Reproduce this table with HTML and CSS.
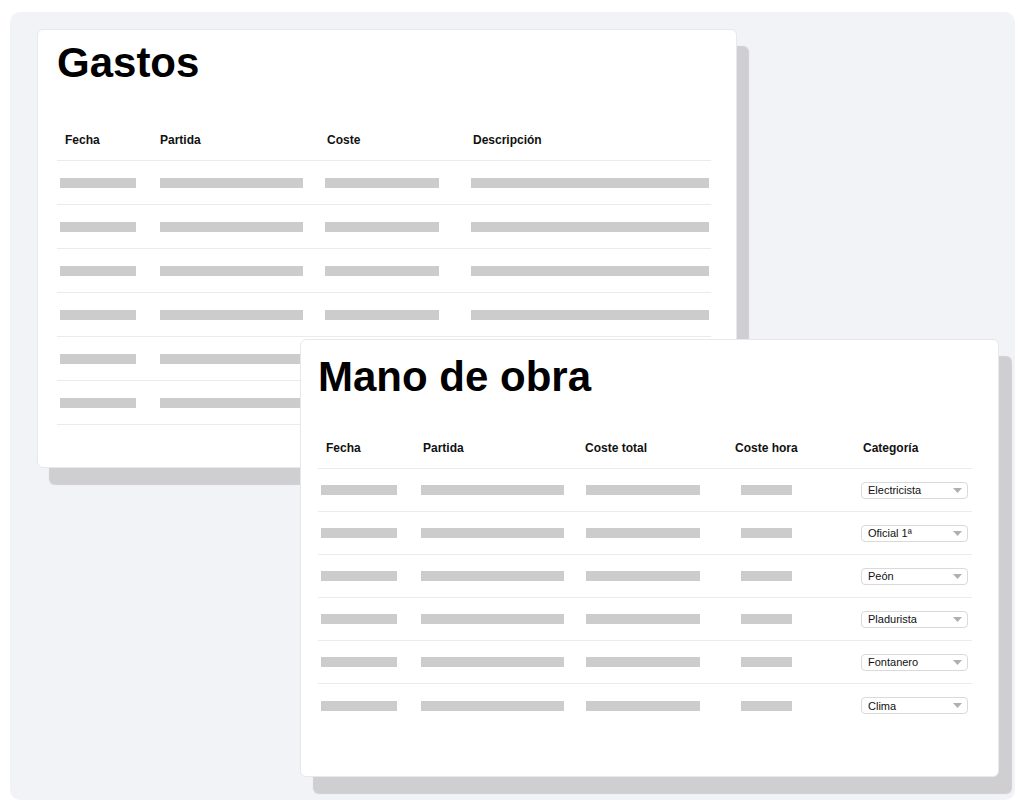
FILE: index.html
```html
<!DOCTYPE html>
<html lang="es">
<head>
<meta charset="utf-8">
<title>Gastos y Mano de obra</title>
<link rel="stylesheet" href="styles.css">
</head>
<body>
<div class="panel">
  <section class="card card-gastos">
    <h1 class="title">Gastos</h1>
    <div class="table t-gastos">
      <div class="row head">
        <div class="cell g1">Fecha</div>
        <div class="cell g2">Partida</div>
        <div class="cell g3">Coste</div>
        <div class="cell g4">Descripción</div>
      </div>
      <div class="row"><div class="cell"><span class="bar w76 b1"></span></div><div class="cell"><span class="bar w143"></span></div><div class="cell"><span class="bar w114"></span></div><div class="cell"><span class="bar w238"></span></div></div>
      <div class="row"><div class="cell"><span class="bar w76 b1"></span></div><div class="cell"><span class="bar w143"></span></div><div class="cell"><span class="bar w114"></span></div><div class="cell"><span class="bar w238"></span></div></div>
      <div class="row"><div class="cell"><span class="bar w76 b1"></span></div><div class="cell"><span class="bar w143"></span></div><div class="cell"><span class="bar w114"></span></div><div class="cell"><span class="bar w238"></span></div></div>
      <div class="row"><div class="cell"><span class="bar w76 b1"></span></div><div class="cell"><span class="bar w143"></span></div><div class="cell"><span class="bar w114"></span></div><div class="cell"><span class="bar w238"></span></div></div>
      <div class="row"><div class="cell"><span class="bar w76 b1"></span></div><div class="cell"><span class="bar w143"></span></div><div class="cell"><span class="bar w114"></span></div><div class="cell"><span class="bar w238"></span></div></div>
      <div class="row"><div class="cell"><span class="bar w76 b1"></span></div><div class="cell"><span class="bar w143"></span></div><div class="cell"><span class="bar w114"></span></div><div class="cell"><span class="bar w238"></span></div></div>
    </div>
  </section>

  <section class="card card-mano">
    <h1 class="title">Mano de obra</h1>
    <div class="table t-mano">
      <div class="row head">
        <div class="cell m1">Fecha</div>
        <div class="cell m2">Partida</div>
        <div class="cell m3">Coste total</div>
        <div class="cell m4">Coste hora</div>
        <div class="cell m5">Categoría</div>
      </div>
      <div class="row"><div class="cell"><span class="bar w76 b1"></span></div><div class="cell"><span class="bar w143"></span></div><div class="cell"><span class="bar w114 b3"></span></div><div class="cell"><span class="bar w51 b4"></span></div><div class="cell"><div class="select"><span>Electricista</span><svg class="caret" width="9" height="5" viewBox="0 0 9 5"><path d="M0 0h9L4.5 5z"/></svg></div></div></div>
      <div class="row"><div class="cell"><span class="bar w76 b1"></span></div><div class="cell"><span class="bar w143"></span></div><div class="cell"><span class="bar w114 b3"></span></div><div class="cell"><span class="bar w51 b4"></span></div><div class="cell"><div class="select"><span>Oficial 1ª</span><svg class="caret" width="9" height="5" viewBox="0 0 9 5"><path d="M0 0h9L4.5 5z"/></svg></div></div></div>
      <div class="row"><div class="cell"><span class="bar w76 b1"></span></div><div class="cell"><span class="bar w143"></span></div><div class="cell"><span class="bar w114 b3"></span></div><div class="cell"><span class="bar w51 b4"></span></div><div class="cell"><div class="select"><span>Peón</span><svg class="caret" width="9" height="5" viewBox="0 0 9 5"><path d="M0 0h9L4.5 5z"/></svg></div></div></div>
      <div class="row"><div class="cell"><span class="bar w76 b1"></span></div><div class="cell"><span class="bar w143"></span></div><div class="cell"><span class="bar w114 b3"></span></div><div class="cell"><span class="bar w51 b4"></span></div><div class="cell"><div class="select"><span>Pladurista</span><svg class="caret" width="9" height="5" viewBox="0 0 9 5"><path d="M0 0h9L4.5 5z"/></svg></div></div></div>
      <div class="row"><div class="cell"><span class="bar w76 b1"></span></div><div class="cell"><span class="bar w143"></span></div><div class="cell"><span class="bar w114 b3"></span></div><div class="cell"><span class="bar w51 b4"></span></div><div class="cell"><div class="select"><span>Fontanero</span><svg class="caret" width="9" height="5" viewBox="0 0 9 5"><path d="M0 0h9L4.5 5z"/></svg></div></div></div>
      <div class="row last"><div class="cell"><span class="bar w76 b1"></span></div><div class="cell"><span class="bar w143"></span></div><div class="cell"><span class="bar w114 b3"></span></div><div class="cell"><span class="bar w51 b4"></span></div><div class="cell"><div class="select"><span>Clima</span><svg class="caret" width="9" height="5" viewBox="0 0 9 5"><path d="M0 0h9L4.5 5z"/></svg></div></div></div>
    </div>
  </section>
</div>
</body>
</html>
```

FILE: styles.css
```css
* { box-sizing: border-box; }

body {
  margin: 0;
  background: #ffffff;
  font-family: "Liberation Sans", Arial, sans-serif;
  color: #000;
}

.panel {
  margin: 12px 0 0 10px;
  width: 1005px;
  height: 788px;
  background: #f2f3f7;
  border-radius: 10px;
  padding: 17px 0 0 27px;
}

.card {
  background: #ffffff;
  border: 1px solid #e8e8ec;
  border-radius: 6px;
  box-shadow: 12px 17px 1px #cfcfd2;
}

.card-gastos {
  width: 700px;
  height: 439px;
  padding: 12px 25px 0 19px;
}

.card-mano {
  position: relative;
  z-index: 1;
  width: 699px;
  height: 438px;
  margin: -129px 0 0 263px;
  padding: 16px 26px 0 17px;
  box-shadow: 13px 17px 1px #cfcfd2;
}

.title {
  margin: 0;
  font-size: 42px;
  line-height: 42px;
  font-weight: 700;
  letter-spacing: 0;
}

.table {
  width: 654px;
}

.t-gastos { margin-top: 33px; }
.t-mano { margin-top: 27px; }

.row {
  display: grid;
  align-items: center;
  border-bottom: 1px solid #ebebef;
}

.t-gastos .row {
  grid-template-columns: 103px 165px 146px 1fr;
  height: 44px;
}

.t-mano .row {
  grid-template-columns: 103px 164px 150px 126px 1fr;
  height: 43px;
}

.t-mano .row.head { height: 44px; }
.t-mano .row.last { border-bottom: none; }

.row.head { padding-top: 3px; }

.cell {
  display: flex;
  align-items: center;
}

.head .cell {
  font-size: 12px;
  font-weight: 700;
  color: #111;
}

.g1, .m1 { padding-left: 8px; }
.g3, .g4, .m2, .m5 { padding-left: 2px; }

.bar {
  display: block;
  height: 10px;
  background: #cccccc;
}

.b1 { margin-left: 3px; }
.b3 { margin-left: 1px; }
.b4 { margin-left: 6px; }

.w76 { width: 76px; }
.w143 { width: 143px; }
.w114 { width: 114px; }
.w238 { width: 238px; }
.w51 { width: 51px; }

.select {
  width: 107px;
  height: 17px;
  border: 1px solid #dadada;
  border-radius: 4px;
  background: #fff;
  display: flex;
  align-items: center;
  justify-content: space-between;
  padding: 0 5px 0 6px;
  font-size: 11px;
  color: #111;
}

.caret {
  display: block;
  fill: #b0b0b0;
}
```
